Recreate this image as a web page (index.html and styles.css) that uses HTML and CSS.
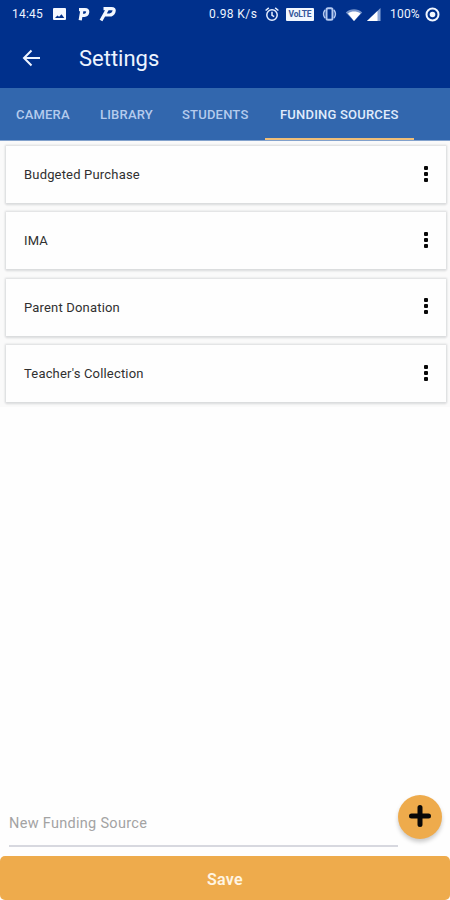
FILE: index.html
```html
<!DOCTYPE html>
<html lang="en">
<head>
<meta charset="utf-8">
<title>Settings</title>
<link rel="stylesheet" href="styles.css">
</head>
<body>
<header>
  <div class="status">
    <span class="clock">14:45</span>
    <svg class="picture" width="13" height="12" viewBox="0 0 13 12"><rect width="13" height="12" rx="1" fill="#f4f8ff"/><path d="M2 10 4.400 7.500l1.700 1.300 2.400-2.500L11.300 10z" fill="#00308a"/></svg>
    <svg class="p-one" width="13" height="14" viewBox="0 0 13 14" fill="none" stroke="#f4f8ff" stroke-width="3.200"><path d="M2.200 13.200 4 2.600M1 2.600H7C9.200 2.600 10 3.600 9.700 5.300S8.300 8.300 6.500 8.300H3.500"/></svg>
    <svg class="p-two" width="18" height="16" viewBox="0 0 18 16" fill="none" stroke="#f4f8ff" stroke-width="3.200"><path d="M2 14.500 8.500 3M4.500 2.700H12.300C14.800 2.700 15.700 3.700 15 5.600S12.800 9 10.500 9H5.500"/></svg>
    <span class="speed">0.98 K/s</span>
    <svg class="alarm" width="14" height="15" viewBox="0 0 14 15" fill="none" stroke="#e6efff" stroke-width="1.500"><circle cx="7" cy="8" r="5.200"/><path d="M.6 3.500 3.800.9M13.400 3.500 10.200.9M7 4.800V8.300L9.200 9.600"/></svg>
    <span class="volte">VoLTE</span>
    <svg class="vibrate" width="15" height="14" viewBox="0 0 15 14" fill="none" stroke="#b4c9f0" stroke-width="2"><rect x="4.500" y="1.200" width="6" height="11.600" rx="1.500"/><path d="M3 2.800Q.2 7 3 11.200M12 2.800Q14.800 7 12 11.200" stroke-width="1.500"/></svg>
    <svg class="wifi" width="18" height="13" viewBox="0 0 18 13"><path d="M.8 4.500C5.500.3 12.500.3 17.200 4.500L9 13z" fill="#7795cb"/><path d="M3 5.500C6.500 2.900 11.500 2.900 15.500 5.500L9 13z" fill="#fff"/></svg>
    <svg class="signal" width="14" height="13" viewBox="0 0 14 13"><path d="M13.500 0V13H0z" fill="#8ca7d8"/><path d="M10.500 3V13H0z" fill="#fff"/></svg>
    <span class="percent">100%</span>
    <svg class="battery" width="15" height="15" viewBox="0 0 15 15"><circle cx="7.500" cy="7.500" r="6" fill="none" stroke="#f2f7ff" stroke-width="2"/><circle cx="7.500" cy="7.500" r="2.800" fill="#f2f7ff"/></svg>
  </div>
  <div class="appbar">
    <svg class="back" width="20" height="20" viewBox="0 0 20 20" fill="none" stroke="#edf4ff" stroke-width="2"><path d="M19 10H3M10.500 2.500 3 10l7.500 7.500"/></svg>
    <h1>Settings</h1>
  </div>
</header>
<nav>
  <a class="camera">CAMERA</a>
  <a class="library">LIBRARY</a>
  <a class="students">STUDENTS</a>
  <a class="active">FUNDING SOURCES</a>
</nav>
<main>
  <ul>
    <li><span>Budgeted Purchase</span><i class="dots"><b></b><b></b><b></b></i></li>
    <li><span>IMA</span><i class="dots"><b></b><b></b><b></b></i></li>
    <li><span>Parent Donation</span><i class="dots"><b></b><b></b><b></b></i></li>
    <li><span>Teacher's Collection</span><i class="dots"><b></b><b></b><b></b></i></li>
  </ul>
</main>
<div class="entry">
  <div class="field"><span>New Funding Source</span></div>
  <div class="add"><svg width="22" height="22" viewBox="0 0 22 22"><path d="M11 2.500V19.500M2.500 11H19.500" stroke="#090909" stroke-width="5" stroke-linecap="round"/></svg></div>
</div>
<div class="save"><span>Save</span></div>
</body>
</html>
```

FILE: styles.css
```css
* { box-sizing: border-box; }
body {
  margin: 0;
  width: 450px;
  height: 900px;
  overflow: hidden;
  display: flex;
  flex-direction: column;
  background: #fefefe;
  font-family: Roboto, sans-serif;
}
svg { display: block; flex: none; }
span, h1, a { white-space: nowrap; }
header { height: 88px; flex: none; background: #00308c; color: #edf4ff; }
.status { height: 28px; display: flex; align-items: center; padding-left: 12px; font-size: 12px; }
.clock { width: 41px; letter-spacing: 0.2px; }
.picture { margin-right: 12px; }
.p-one { margin-right: 8px; }
.p-two { margin-right: 92px; }
.speed { width: 56px; letter-spacing: 0.4px; }
.alarm { margin-right: 7px; }
.volte {
  width: 28px;
  height: 13px;
  margin-right: 8px;
  border-radius: 1px;
  background: #f2f7ff;
  color: #36579b;
  font-size: 8.500px;
  font-weight: 700;
  line-height: 13px;
  text-align: center;
  letter-spacing: -0.2px;
}
.vibrate { margin-right: 8px; }
.wifi { margin-right: 4px; }
.signal { margin-right: 9px; }
.percent { width: 35px; letter-spacing: 0.2px; }
.appbar { height: 60px; display: flex; align-items: center; padding-left: 21px; }
.back { margin-right: 38px; }
h1 { margin: 1px 0 0; font-size: 22px; font-weight: 400; }
nav {
  height: 53px;
  flex: none;
  display: flex;
  background: #3267ae;
  border-bottom: 1px solid #82a1cc;
  color: #b5cbed;
  font-size: 13px;
  font-weight: 500;
  line-height: 54px;
  letter-spacing: 0.2px;
}
nav a { padding-left: 15px; }
nav .camera { width: 85px; padding-left: 16px; }
.library { width: 82px; }
.students { width: 98px; }
.active { width: 149px; border-bottom: 2px solid #efbe78; color: #e0ecfc; }
main { flex: 1; }
ul {
  margin: 0;
  padding: 5px 4px 5px 6px;
  display: flex;
  flex-direction: column;
  gap: 9.400px;
  list-style: none;
  background: #fafafa;
}
li {
  height: 57px;
  display: flex;
  align-items: center;
  justify-content: space-between;
  padding: 0 18px;
  background: #fefefe;
  box-shadow: 0 0 2px 1px #d9dbdc, 0 2px 2px #dedfe0;
  color: #303030;
  font-size: 13px;
  letter-spacing: 0.18px;
}
.dots { display: flex; flex-direction: column; gap: 2px; margin-top: -2px; }
.dots b { width: 4px; height: 4px; border-radius: 1px; background: #080808; }
.entry { height: 62px; flex: none; display: flex; padding-left: 9px; }
.field {
  width: 389px;
  height: 53px;
  padding-top: 21px;
  border-bottom: 2px solid #d7d8df;
  color: #a3a3a3;
  font-size: 14.500px;
  letter-spacing: 0.3px;
}
.add {
  width: 44px;
  height: 44px;
  margin-top: 1px;
  display: flex;
  align-items: center;
  justify-content: center;
  padding-bottom: 2px;
  border-radius: 50%;
  background: #eeab4c;
  box-shadow: 0 3px 4px #00000035;
}
.save {
  height: 44px;
  flex: none;
  display: flex;
  align-items: center;
  justify-content: center;
  padding-top: 3px;
  border-radius: 5px;
  background: #eeab4c;
  color: #fff5e3;
  font-size: 16px;
  font-weight: 600;
  letter-spacing: 0.3px;
}
```
